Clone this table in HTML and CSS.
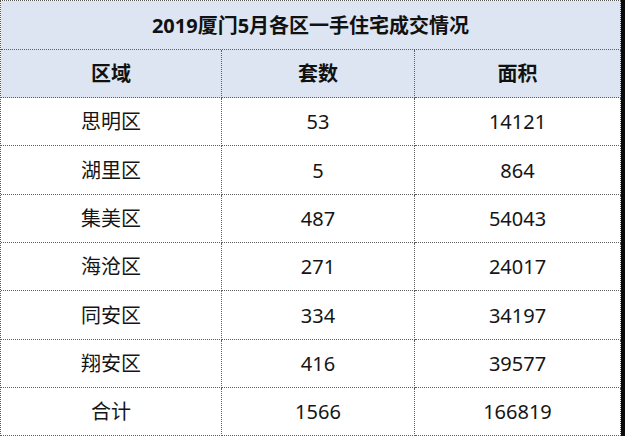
FILE: index.html
```html
<!DOCTYPE html>
<html lang="zh-CN">
<head>
<meta charset="utf-8">
<title>2019厦门5月各区一手住宅成交情况</title>
<link rel="stylesheet" href="styles.css">
</head>
<body>
<div class="page">
  <div class="sheet">
    <div class="cell title">2019厦门5月各区一手住宅成交情况</div>
    <div class="cell head">区域</div>
    <div class="cell head">套数</div>
    <div class="cell head">面积</div>
    <div class="cell">思明区</div><div class="cell">53</div><div class="cell">14121</div>
    <div class="cell">湖里区</div><div class="cell">5</div><div class="cell">864</div>
    <div class="cell">集美区</div><div class="cell">487</div><div class="cell">54043</div>
    <div class="cell">海沧区</div><div class="cell">271</div><div class="cell">24017</div>
    <div class="cell">同安区</div><div class="cell">334</div><div class="cell">34197</div>
    <div class="cell">翔安区</div><div class="cell">416</div><div class="cell">39577</div>
    <div class="cell">合计</div><div class="cell">1566</div><div class="cell">166819</div>
  </div>
  <div class="edge"></div>
</div>
</body>
</html>
```
FILE: styles.css
```css
html, body {
  margin: 0;
  padding: 0;
  background: #ffffff;
}
.page {
  display: flex;
  width: 625px;
  height: 438px;
  align-items: flex-start;
}
.sheet {
  display: grid;
  grid-template-columns: 221px 193px 206px;
  grid-template-rows: 49px 48px 48px 49px 48px 48px 49px 48px 48px;
  border-top: 1px dotted #555555;
  border-left: 1px dotted #555555;
  font-family: "Noto Sans", "Noto Sans CJK SC", sans-serif;
  font-size: 20px;
  color: #151515;
}
.cell {
  box-sizing: border-box;
  border-right: 1px dotted #5e5e5e;
  border-bottom: 1px dotted #5e5e5e;
  display: flex;
  align-items: center;
  justify-content: center;
  line-height: 1;
  padding-top: 1px;
}
.title {
  grid-column: 1 / 4;
  background: #dce5f1;
  font-weight: 700;
  color: #111111;
}
.head {
  background: #dce5f1;
  font-weight: 700;
  color: #111111;
}
.edge {
  width: 4px;
  height: 436px;
  background: #0a0a0a;
}
```
